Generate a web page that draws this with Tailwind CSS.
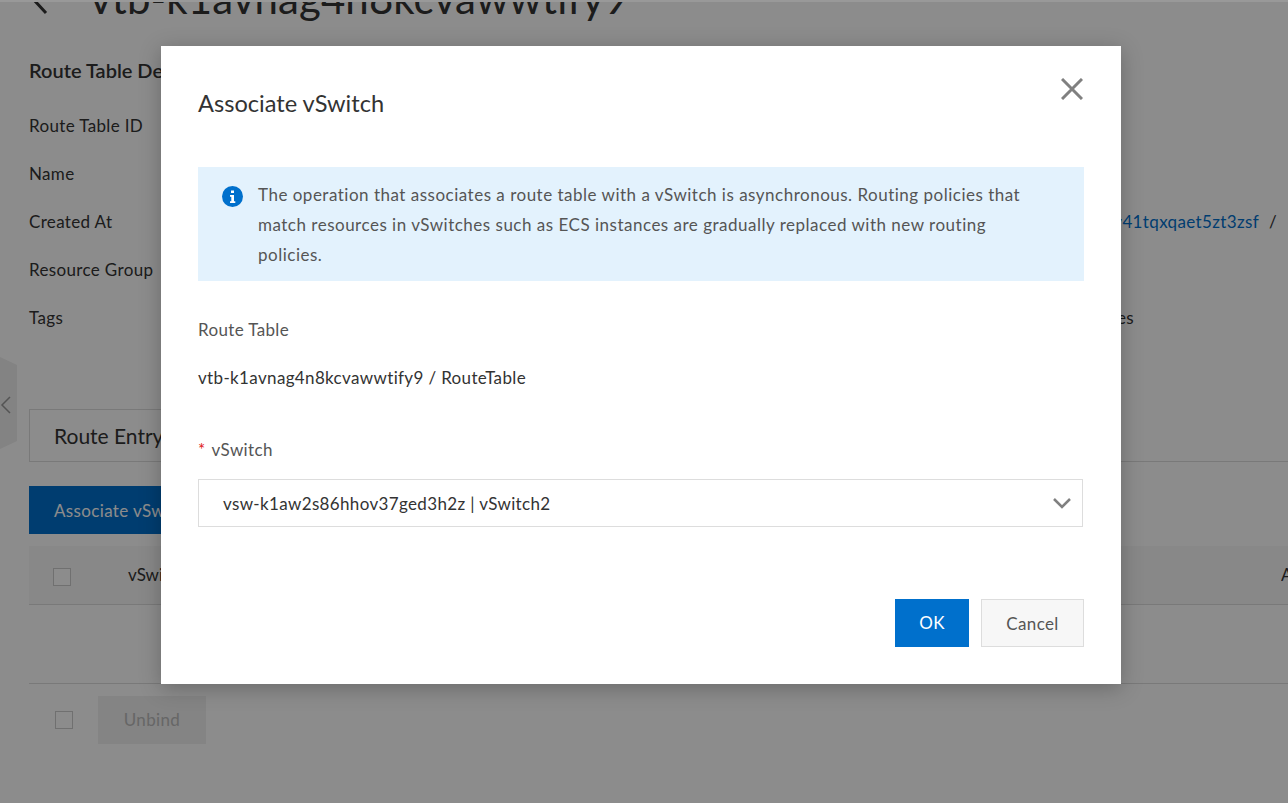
<!DOCTYPE html>
<html><head><meta charset="utf-8"><script src="https://cdn.jsdelivr.net/npm/@tailwindcss/browser@4"></script></head>
<body class="m-0 overflow-hidden">
<div class="relative w-[1288px] h-[803px] overflow-hidden bg-white text-[17px] tracking-[0.35px] text-[#333] font-['Lato','Open_Sans',sans-serif]">
  <!-- page -->
  <div class="px-[29px] h-full flex flex-col">
    <div class="h-[46px] -mt-[25px] flex items-center shrink-0">
      <svg class="w-[18px] h-[30px] ml-[2px] mt-[4px]" viewBox="0 0 18 30" fill="none" stroke="#333" stroke-width="3"><path d="M15 2 3 15l12 13"/></svg>
      <span class="ml-[41px] text-[42px] tracking-[0.1px] leading-[46px] whitespace-nowrap">vtb-k1avnag4n8kcvawwtify9</span>
    </div>
    <div class="mt-[37px] text-[20px] tracking-normal leading-[24px] font-semibold">Route Table Details</div>
    <div class="mt-[32px] flex flex-col gap-[24px] leading-[24px]">
      <div>Route Table ID</div>
      <div>Name</div>
      <div class="flex justify-between"><span>Created At</span><span class="text-[#0070cc] -mr-[18px]">vpc-k1av41tqxqaet5zt3zsf<span class="text-[#333] ml-[10px]">/</span></span></div>
      <div>Resource Group</div>
      <div class="flex"><span>Tags</span><span class="ml-[992px]">Resources</span></div>
    </div>
    <div class="mt-[79px] flex border-b border-[#ddd] -mr-[29px]">
      <div class="h-[53px] w-[400px] -mb-px border border-[#ddd] px-[24px] text-[21px] tracking-normal leading-[52px]">Route Entry</div>
    </div>
    <div class="mt-[24px] h-[48px] w-[200px] bg-[#0070cc] text-white px-[25px] leading-[50px] shrink-0">Associate vSwitch</div>
    <div class="mt-[12px] h-[59px] -mr-[29px] bg-[#f7f7f7] border-b border-[#ddd] flex items-center shrink-0 relative">
      <div class="ml-[24px] w-[18px] h-[18px] border border-[#ccc] bg-white mt-[3px]"></div>
      <span class="ml-[57px] tracking-normal">vSwitch</span>
      <span class="ml-auto w-[7px] overflow-hidden">A</span>
    </div>
    <div class="mt-[78px] border-t border-[#ddd] h-[61px] flex items-center gap-[25px] -mr-[29px] pt-[12px] shrink-0">
      <div class="ml-[26px] w-[18px] h-[18px] border border-[#ccc] bg-white"></div>
      <div class="w-[108px] h-[48px] bg-[#f0f0f0] text-[#bbb] text-center leading-[48px]">Unbind</div>
    </div>
  </div>
  <svg class="absolute left-0 top-[357px]" width="18" height="92" viewBox="0 0 18 92"><path d="M0 0 17 8v76L0 92z" fill="#eee"/><path d="M10 40 2 48l8 8" fill="none" stroke="#999" stroke-width="1.5"/></svg>
  <!-- overlay -->
  <div class="absolute inset-0 bg-black/45"></div>
  <div class="absolute inset-x-0 top-0 h-[2px] bg-[#999]"></div>
  <!-- dialog -->
  <div class="absolute left-[161px] top-[46px] w-[960px] h-[638px] bg-white shadow-[0_4px_20px_rgba(0,0,0,0.25)] px-[37px] flex flex-col">
    <svg class="absolute left-[900px] top-[32px]" width="22" height="22" viewBox="0 0 22 22" fill="none" stroke="#808080" stroke-width="3"><path d="M1 1 21 21M21 1 1 21"/></svg>
    <div class="mt-[41px] text-[23.6px] tracking-normal leading-[32px] text-[#333]">Associate vSwitch</div>
    <div class="mt-[48px] h-[114px] bg-[#e3f2fd] flex pl-[24px] pr-[60px] pt-[13px] text-[#555] leading-[30px]">
      <svg class="w-[21px] h-[21px] mt-[6px] shrink-0" viewBox="0 0 21 21"><circle cx="10.5" cy="10.5" r="10.5" fill="#0070cc"/><path d="M9 4.5h3v2.6H9zM8 9h4v6.200h1.300V17H8v-1.800h1.300v-4.400H8z" fill="#fff"/></svg>
      <p class="ml-[15px] tracking-[0.5px]">The operation that associates a route table with a vSwitch is asynchronous. Routing policies that match resources in vSwitches such as ECS instances are gradually replaced with new routing policies.</p>
    </div>
    <div class="mt-[37px] leading-[24px] text-[#555]">Route Table</div>
    <div class="mt-[24px] leading-[24px] text-[#333]">vtb-k1avnag4n8kcvawwtify9 / RouteTable</div>
    <div class="mt-[48px] leading-[24px] text-[#555]"><span class="text-[#e02020] mr-[6px]">*</span>vSwitch</div>
    <div class="mt-[17px] h-[48px] w-[885px] border border-[#ddd] flex items-center pl-[24px] pr-[11px] pt-[1px] text-[#333]">
      <span>vsw-k1aw2s86hhov37ged3h2z | vSwitch2</span>
      <svg class="ml-auto" width="18" height="11" viewBox="0 0 18 11" fill="none" stroke="#808080" stroke-width="2.500"><path d="M1 1l8 8 8-8"/></svg>
    </div>
    <div class="mt-[72px] flex justify-end gap-[12px]">
      <div class="w-[74px] h-[48px] bg-[#0070cc] text-white text-center leading-[48px]">OK</div>
      <div class="w-[103px] h-[48px] bg-[#f7f7f7] border border-[#ddd] text-[#555] text-center leading-[47px]">Cancel</div>
    </div>
  </div>
</div>
</body></html>
